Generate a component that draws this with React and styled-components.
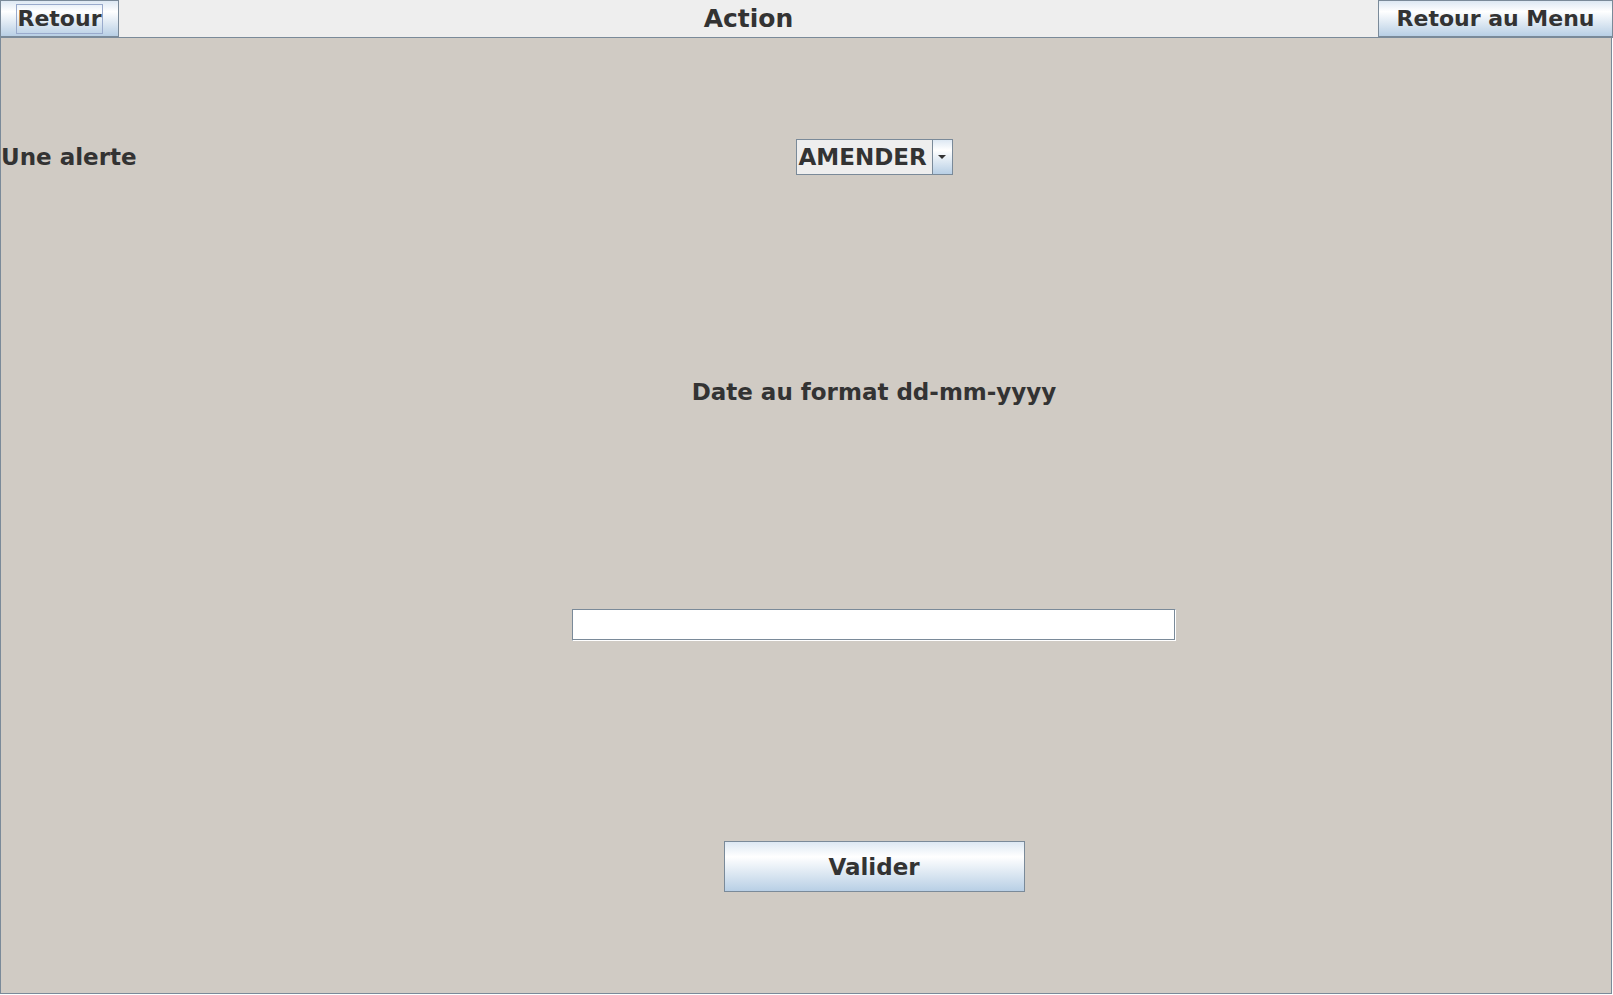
import styled, { createGlobalStyle } from "styled-components";

const GlobalStyle = createGlobalStyle`
  html, body {
    margin: 0;
    padding: 0;
    background: #ffffff;
  }
  body {
    font-family: "DejaVu Sans", "Liberation Sans", sans-serif;
    font-weight: bold;
    color: #333333;
  }
`;

const metalGradient =
  "linear-gradient(to bottom, #dde8f3 0%, #ffffff 30%, #b8cfe5 100%)";

const Window = styled.div`
  width: 1613px;
  height: 995px;
  display: flex;
  flex-direction: column;
  box-sizing: border-box;
`;

const TopBar = styled.div`
  flex-shrink: 0;
  height: 37px;
  display: grid;
  grid-template-columns: 119px 1fr 235px;
  background: #eeeeee;
  border-bottom: 1px solid #7a8a99;
`;

const Button = styled.button`
  box-sizing: border-box;
  display: flex;
  align-items: center;
  justify-content: center;
  width: ${(p) => p.$w || "100%"};
  height: ${(p) => p.$h || "100%"};
  padding: 0;
  margin: 0;
  font-family: "DejaVu Sans", sans-serif;
  font-weight: bold;
  font-size: ${(p) => p.$size || "22px"};
  color: #333333;
  background: ${metalGradient};
  border: 1px solid #7a8a99;
  cursor: pointer;
`;

const Focus = styled.span`
  display: inline-block;
  padding: 1px 0;
  line-height: 26px;
  border: 1px solid #99aacc;
`;

const Title = styled.div`
  display: flex;
  align-items: center;
  justify-content: center;
  font-size: 25px;
`;

const Main = styled.div`
  flex: 1;
  min-height: 0;
  background: #d0cbc4;
  border-left: 1px solid #7a8a99;
  border-right: 1px solid #7a8a99;
  border-bottom: 1px solid #7a8a99;
  box-shadow: 1px 1px 0 #ffffff;
  margin-right: 1px;
  margin-bottom: 1px;
  display: grid;
  grid-template-columns: 571px 604px 1fr;
  grid-template-rows: 237px 234px 231px 1fr;
`;

const Label = styled.div`
  grid-column: ${(p) => p.$col};
  grid-row: ${(p) => p.$row};
  justify-self: ${(p) => p.$justify || "center"};
  align-self: center;
  font-size: 23px;
  white-space: nowrap;
`;

const Cell = styled.div`
  grid-column: ${(p) => p.$col};
  grid-row: ${(p) => p.$row};
  justify-self: ${(p) => p.$justify || "center"};
  align-self: center;
`;

const Combo = styled.div`
  box-sizing: border-box;
  width: 157px;
  height: 36px;
  display: flex;
  border: 1px solid #7a8a99;
  background: #eeeeee;
`;

const ComboValue = styled.div`
  flex: 1;
  display: flex;
  align-items: center;
  padding-left: 2px;
  font-size: 23px;
`;

const ComboArrow = styled.div`
  width: 19px;
  display: flex;
  align-items: center;
  justify-content: center;
  border-left: 1px solid #7a8a99;
  background: ${metalGradient};

  &::after {
    content: "";
    border-left: 4px solid transparent;
    border-right: 4px solid transparent;
    border-top: 4px solid #333333;
  }
`;

const TextField = styled.input`
  box-sizing: border-box;
  display: block;
  width: 604px;
  height: 32px;
  margin: 0;
  background: #ffffff;
  border-style: solid;
  border-width: 1px;
  border-color: #7a8a99 #ffffff #ffffff #7a8a99;
  box-shadow: inset -1px -1px 0 #7a8a99;
  outline: none;
  font-family: "DejaVu Sans", sans-serif;
  font-size: 16px;
`;

export default function App() {
  return (
    <>
      <GlobalStyle />
      <Window>
        <TopBar>
          <Button>
            <Focus>Retour</Focus>
          </Button>
          <Title>Action</Title>
          <Button>Retour au Menu</Button>
        </TopBar>
        <Main>
          <Label $col={1} $row={1} $justify="start">
            Une alerte
          </Label>
          <Cell $col={2} $row={1}>
            <Combo>
              <ComboValue>AMENDER</ComboValue>
              <ComboArrow />
            </Combo>
          </Cell>
          <Label $col={2} $row={2}>
            Date au format dd-mm-yyyy
          </Label>
          <Cell $col={2} $row={3}>
            <TextField type="text" />
          </Cell>
          <Cell $col={2} $row={4}>
            <Button $w="301px" $h="51px" $size="23px">
              Valider
            </Button>
          </Cell>
        </Main>
      </Window>
    </>
  );
}
